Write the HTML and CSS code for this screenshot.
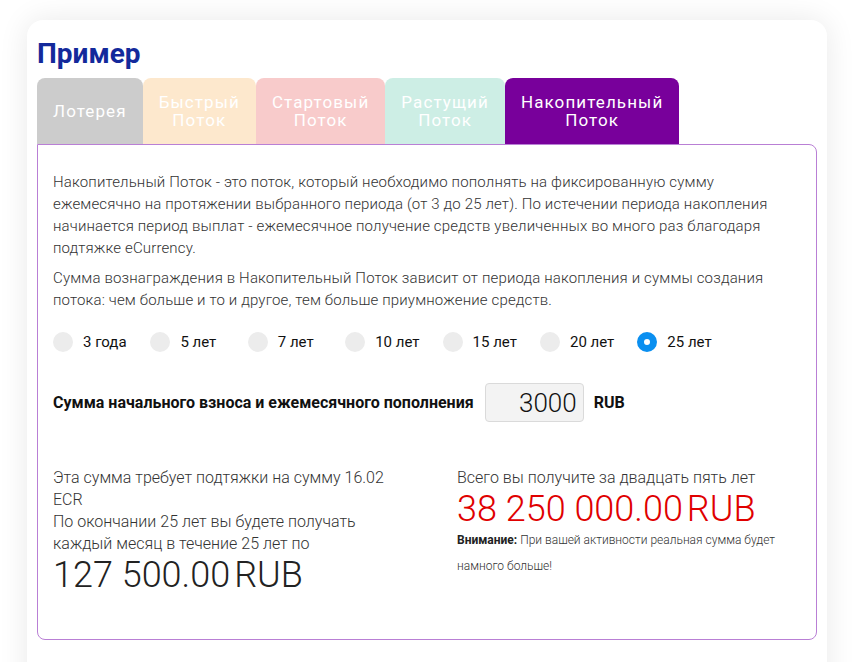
FILE: index.html
```html
<!DOCTYPE html>
<html lang="ru">
<head>
    <meta charset="UTF-8">
    <meta name="viewport" content="width=device-width, initial-scale=1.0">
    <title>Пример</title>
    <link rel="stylesheet" href="styles.css">
</head>
<body>
    <div class="card">
        <h1>Пример</h1>

        <div class="tabs">
            <div class="tab tab-lottery">Лотерея</div>
            <div class="tab tab-fast">Быстрый<br>Поток</div>
            <div class="tab tab-start">Стартовый<br>Поток</div>
            <div class="tab tab-growing">Растущий<br>Поток</div>
            <div class="tab tab-saving active">Накопительный<br>Поток</div>
        </div>

        <div class="panel">
            <p>Накопительный Поток - это поток, который необходимо пополнять на фиксированную сумму ежемесячно на протяжении выбранного периода (от 3 до 25 лет). По истечении периода накопления начинается период выплат - ежемесячное получение средств увеличенных во много раз благодаря подтяжке eCurrency.</p>
            <p>Сумма вознаграждения в Накопительный Поток зависит от периода накопления и суммы создания потока: чем больше и то и другое, тем больше приумножение средств.</p>

            <div class="periods">
                <label class="period"><span class="radio"></span>3 года</label>
                <label class="period"><span class="radio"></span>5 лет</label>
                <label class="period"><span class="radio"></span>7 лет</label>
                <label class="period"><span class="radio"></span>10 лет</label>
                <label class="period"><span class="radio"></span>15 лет</label>
                <label class="period"><span class="radio"></span>20 лет</label>
                <label class="period"><span class="radio checked"></span>25 лет</label>
            </div>

            <div class="amount-row">
                <span class="amount-label">Сумма начального взноса и ежемесячного пополнения</span>
                <div class="amount-input">3000</div>
                <span class="amount-currency">RUB</span>
            </div>

            <div class="results">
                <div class="result-col left">
                    <div class="result-text">Эта сумма требует подтяжки на сумму 16.02 ECR</div>
                    <div class="result-text">По окончании 25 лет вы будете получать каждый месяц в течение 25 лет по</div>
                    <div class="big-sum">127 500.00<span class="cur">RUB</span></div>
                </div>
                <div class="result-col right">
                    <div class="result-text">Всего вы получите за двадцать пять лет</div>
                    <div class="big-sum red">38 250 000.00<span class="cur">RUB</span></div>
                    <div class="note"><strong>Внимание:</strong> При вашей активности реальная сумма будет намного больше!</div>
                </div>
            </div>
        </div>
    </div>
</body>
</html>
```

FILE: styles.css
```css
html, body {
    height: 100%;
    overflow: hidden;
}

body {
    margin: 0;
    padding: 20px 0 0 27px;
    box-sizing: border-box;
    background: #ffffff;
    font-family: Roboto, 'Liberation Sans', sans-serif;
    color: #333;
}

.card {
    width: 780px;
    height: 680px;
    padding: 10px 10px 0;
    background: #fff;
    border-radius: 16px;
    box-shadow: 0 0 30px rgba(0, 0, 0, 0.09);
}

h1 {
    margin: 7px 0 7px;
    font-size: 28px;
    font-weight: 700;
    line-height: 34px;
    color: #13299b;
}

.tabs {
    display: flex;
}

.tab {
    height: 66px;
    padding: 0 16px;
    display: flex;
    align-items: center;
    justify-content: center;
    text-align: center;
    color: #fff;
    font-size: 17px;
    line-height: 18px;
    letter-spacing: 1.1px;
    border-radius: 8px 8px 0 0;
}

.tab-lottery { background: #cccccc; }
.tab-fast { background: #fde8cd; }
.tab-start { background: #f8cbcb; }
.tab-growing { background: #cdeee5; }
.tab-saving { background: #78009b; }

.panel {
    width: 780px;
    height: 496px;
    box-sizing: border-box;
    padding: 26px 15px 40px;
    border: 1px solid #b97fd5;
    border-radius: 0 8px 8px 8px;
}

.panel p {
    margin: 0 0 8px;
    font-size: 15px;
    font-weight: 300;
    line-height: 22px;
    letter-spacing: 0.15px;
    color: #333;
}

.periods {
    display: flex;
    margin-top: 21px;
}

.period {
    width: 97.4px;
    display: flex;
    align-items: center;
    font-size: 15px;
    color: #111;
}

.radio {
    width: 20px;
    height: 20px;
    margin-right: 10px;
    box-sizing: border-box;
    border-radius: 50%;
    background: #ececec;
}

.radio.checked {
    background: #fff;
    border: 7px solid #0a8ff0;
}

.amount-row {
    display: flex;
    align-items: center;
    margin-top: 31px;
}

.amount-label {
    font-size: 16px;
    font-weight: 700;
    color: #111;
}

.amount-input {
    width: 99px;
    height: 39px;
    margin-left: 11px;
    box-sizing: border-box;
    padding-right: 6px;
    background: #f3f3f3;
    border: 1px solid #dadada;
    border-radius: 4px;
    text-align: right;
    font-size: 26px;
    font-weight: 300;
    line-height: 38px;
    color: #111;
}

.amount-currency {
    margin-left: 10px;
    font-size: 16px;
    font-weight: 700;
    color: #111;
}

.results {
    display: flex;
    margin-top: 45px;
}

.result-col {
    width: 374px;
    box-sizing: border-box;
}

.result-col.left { padding-right: 30px; }
.result-col.right { padding-left: 30px; }

.result-text {
    font-size: 16px;
    font-weight: 300;
    line-height: 22px;
    color: #333;
}

.big-sum {
    font-size: 36px;
    font-weight: 300;
    line-height: 40px;
    color: #222;
}

.big-sum .cur {
    margin-left: 4px;
}

.big-sum.red {
    color: #e00000;
}

.note {
    margin-top: -2px;
    font-size: 12px;
    font-weight: 300;
    line-height: 26px;
    color: #333;
}

.note strong {
    font-weight: 700;
    color: #222;
}
```
